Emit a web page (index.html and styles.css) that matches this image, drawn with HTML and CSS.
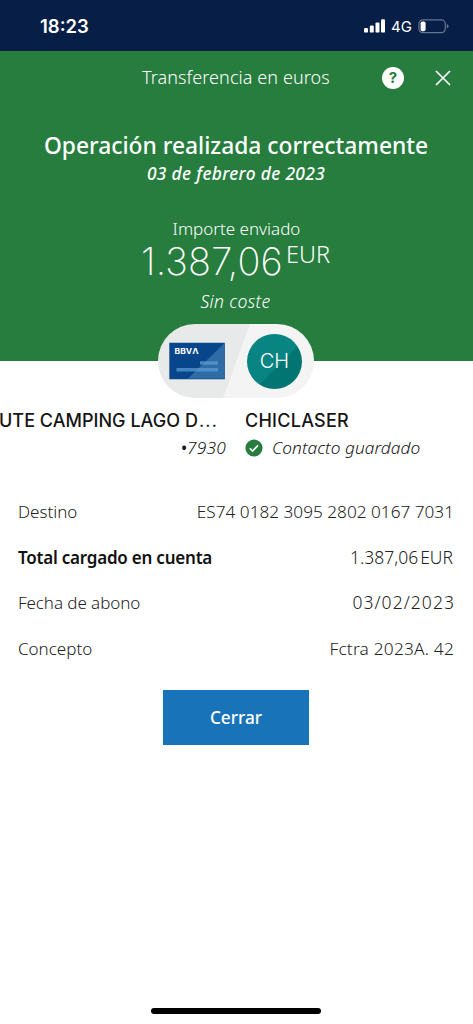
FILE: index.html
```html
<!DOCTYPE html>
<html lang="es">
<head>
<meta charset="utf-8">
<meta name="viewport" content="width=device-width, initial-scale=1">
<title>Transferencia en euros</title>
<link rel="stylesheet" href="styles.css">
</head>
<body>
<div class="screen">
  <div class="status">
    <span class="time">18:23</span>
    <div class="status-icons">
      <svg class="signal" width="22" height="14" viewBox="0 0 22 14" fill="#fff"><rect x="0" y="9" width="4" height="4.6" rx="1.2"/><rect x="5.8" y="6.6" width="4" height="7" rx="1.2"/><rect x="11.5" y="3.4" width="4" height="10.2" rx="1.2"/><rect x="17" y="0.3" width="4" height="13.3" rx="1.2"/></svg>
      <span class="network">4G</span>
      <svg class="battery" width="31" height="15" viewBox="0 0 31 15"><rect x="0.9" y="0.9" width="26.4" height="12.8" rx="4" fill="none" stroke="#66758f" stroke-width="1.2"/><rect x="2.6" y="2.4" width="5" height="9.8" rx="1.8" fill="#fff"/><path d="M28.8 5v4.6q1.7-.6 1.7-2.3T28.8 5z" fill="#66758f"/></svg>
    </div>
  </div>
  <header class="hero">
    <div class="nav">
      <span class="nav-title">Transferencia en euros</span>
      <span class="help">?</span>
      <svg class="close" width="16" height="16" viewBox="0 0 16 16" fill="none" stroke="#fff" stroke-width="1.7"><path d="M1 1l14 14M15 1L1 15"/></svg>
    </div>
    <h1 class="title">Operación realizada correctamente</h1>
    <p class="date">03 de febrero de 2023</p>
    <p class="caption">Importe enviado</p>
    <div class="amount"><span class="figure">1.387,06</span><span class="currency">EUR</span></div>
    <p class="cost">Sin coste</p>
  </header>
  <div class="pill">
    <svg class="card" width="56" height="38" viewBox="0 0 56 38"><path d="M.3.8h55.5v36.5H.3z" fill="#07468a"/><path d="M55 1.5v35H19z" fill="#2f6ca6"/><path d="M31 19.2h18v3.6H31zM7.5 26h41.5v3.4H7.5z" fill="#5b9bd0" opacity=".75"/><text class="brand" x="5.5" y="11.6" textLength="24" lengthAdjust="spacingAndGlyphs">BBVΛ</text></svg>
    <div class="avatar">CH</div>
  </div>
  <section class="parties">
    <div class="sender">
      <div class="party-name sender-name">UTE CAMPING LAGO D<span class="dots">...</span></div>
      <div class="detail sender-account"><b>•</b>7930</div>
    </div>
    <div class="receiver">
      <div class="party-name receiver-name">CHICLASER</div>
      <div class="detail saved">
        <svg width="18" height="18" viewBox="0 0 18 18"><circle cx="9" cy="9" r="8.6" fill="#277d3e"/><path d="M4.8 9.3l2.7 2.7 5.6-5.6" fill="none" stroke="#fff" stroke-width="1.6"/></svg>
        <span class="saved-text">Contacto guardado</span>
      </div>
    </div>
  </section>
  <dl class="rows">
    <div class="row"><dt>Destino</dt><dd class="account">ES74 0182 3095 2802 0167 7031</dd></div>
    <div class="row"><dt class="strong">Total cargado en cuenta</dt><dd class="total">1.387,06<span class="unit">EUR</span></dd></div>
    <div class="row"><dt class="value-date">Fecha de abono</dt><dd class="day">03/02/2023</dd></div>
    <div class="row"><dt>Concepto</dt><dd class="concept">Fctra 2023A. 42</dd></div>
  </dl>
  <button class="button">Cerrar</button>
  <div class="home-bar"></div>
</div>
</body>
</html>
```
FILE: styles.css
```css
* { box-sizing: border-box; margin: 0; padding: 0; }
body { background: #fff; font-family: "Noto Sans", "Open Sans", sans-serif; font-weight: 300; font-size: 17px; color: #222; overflow: hidden; }
.screen { width: 473px; height: 1024px; display: flex; flex-direction: column; overflow: hidden; }
.status { height: 51px; flex: none; background: #071f46; color: #fff; display: flex; justify-content: space-between; padding: 16px 24px 0 40px; font-family: Inter, sans-serif; }
.time { font-size: 18.5px; line-height: 21px; font-weight: 600; }
.status-icons { display: flex; align-items: flex-start; }
.signal { margin-top: 3px; }
.network { font-size: 15px; line-height: 21px; font-weight: 400; margin-left: 5px; width: 21px; }
.battery { margin: 3px 0 0 6px; }
.hero { height: 310px; flex: none; background: #277d3e; color: #fff; text-align: center; white-space: nowrap; }
.nav { height: 54px; display: flex; align-items: center; padding-left: 142px; }
.nav-title { width: 240px; text-align: left; font-size: 18px; letter-spacing: .08px; padding-bottom: 2px; }
.help { width: 22px; height: 22px; flex: none; border-radius: 50%; background: #fff; color: #277d3e; font: 700 15px/22px Inter, sans-serif; }
.close { margin-left: 31px; }
.title { font-size: 22.8px; line-height: 30px; font-weight: 500; margin: 26px 1px 0 0; }
.date { font-size: 17.4px; line-height: 24px; font-weight: 500; font-style: italic; letter-spacing: .34px; margin: 0 1px 0 0; }
.caption { font-size: 17px; line-height: 24px; margin-top: 32px; }
.amount { height: 40px; display: flex; padding-left: 141px; }
.figure { font: 200 38px/40px Inter, sans-serif; letter-spacing: .2px; width: 145px; text-align: left; }
.currency { font-size: 23.5px; line-height: 26px; }
.cost { font-size: 17.5px; line-height: 24px; font-style: italic; letter-spacing: .35px; margin: 8px 2px 0 0; }
.pill { position: relative; width: 156px; height: 74px; flex: none; margin: -37px 0 0 158px; border-radius: 37px; background: linear-gradient(110deg, #e8e9e9 50%, #f4f4f4 50.5%); display: flex; align-items: center; padding-left: 11px; }
.brand { font: 700 8px Inter, sans-serif; fill: #fff; }
.avatar { width: 55px; height: 55px; margin-left: 22px; border-radius: 50%; background: linear-gradient(135deg, #088482 57%, #027471 57.5%); color: #fff; text-align: center; font: 300 20px/55px Inter, sans-serif; }
.parties { display: flex; height: 84px; flex: none; padding-top: 8px; white-space: nowrap; color: #151515; }
.sender { width: 245px; }
.party-name { font: 500 18px/28px Inter, sans-serif; padding-top: 1px; height: 28px; }
.receiver-name { letter-spacing: .25px; }
.sender-name { letter-spacing: .03px; margin-left: -1px; }
.dots { letter-spacing: 1.2px; font-weight: 400; margin-left: 1px; }
.detail { font-size: 17.3px; line-height: 28px; font-style: italic; }
.sender-account { text-align: right; padding-right: 19px; letter-spacing: .2px; }
.saved { display: flex; align-items: center; gap: 9px; }
.saved-text { letter-spacing: .05px; }
.rows { padding: 7px 19px 0 18px; height: 208px; flex: none; white-space: nowrap; }
.row { display: flex; justify-content: space-between; height: 45.7px; line-height: 45px; }
.strong { font-weight: 600; color: #111; letter-spacing: -.22px; }
.account { font-size: 17.2px; }
.total { font-size: 17.5px; margin-right: 1px; }
.value-date { letter-spacing: -.07px; }
.day { font-size: 17.5px; letter-spacing: 1.05px; margin-right: -1px; }
.concept { font-size: 17.3px; letter-spacing: .2px; }
.unit { margin-left: 2px; }
.button { width: 146px; height: 55px; flex: none; margin-left: 163px; border: 0; background: #1973b8; color: #fff; font: 500 17.2px "Noto Sans", sans-serif; }
.home-bar { width: 170px; height: 6px; flex: none; margin: auto 0 10px 151px; border-radius: 3px; background: #000; }
```
